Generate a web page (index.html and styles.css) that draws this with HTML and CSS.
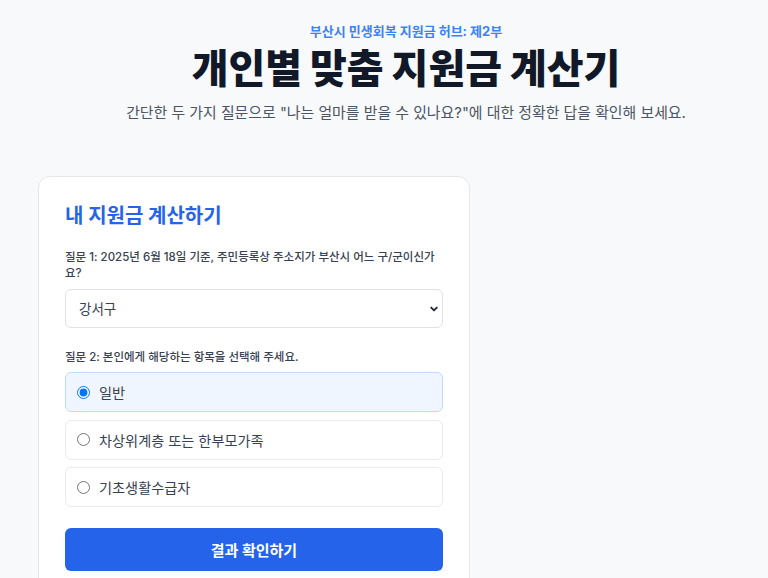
FILE: index.html
```html
<!DOCTYPE html>
<html lang="ko">
<head>
    <meta charset="UTF-8">
    <meta name="viewport" content="width=device-width, initial-scale=1.0">
    <title>개인별 맞춤 지원금 계산기</title>
    <link rel="stylesheet" href="styles.css">
</head>
<body>
    <header class="hero">
        <p class="hero-kicker">부산시 민생회복 지원금 허브: 제2부</p>
        <h1 class="hero-title">개인별 맞춤 지원금 계산기</h1>
        <p class="hero-desc">간단한 두 가지 질문으로 "나는 얼마를 받을 수 있나요?"에 대한 정확한 답을 확인해 보세요.</p>
    </header>

    <main class="layout">
        <section class="calc-card">
            <h2 class="calc-title">내 지원금 계산하기</h2>

            <label class="q-label" for="district">질문 1: 2025년 6월 18일 기준, 주민등록상 주소지가 부산시 어느 구/군이신가요?</label>
            <div class="select-wrap">
                <select id="district" class="district-select">
                    <option>강서구</option>
                    <option>금정구</option>
                    <option>기장군</option>
                    <option>남구</option>
                    <option>동구</option>
                    <option>동래구</option>
                    <option>부산진구</option>
                    <option>북구</option>
                    <option>사상구</option>
                    <option>사하구</option>
                    <option>서구</option>
                    <option>수영구</option>
                    <option>연제구</option>
                    <option>영도구</option>
                    <option>중구</option>
                    <option>해운대구</option>
                </select>
                <svg class="select-arrow" width="10" height="10" viewBox="0 0 10 10"><path d="M2.2 3.6 L5 6.4 L7.8 3.6" fill="none" stroke="#1f2937" stroke-width="1.9" stroke-linecap="round" stroke-linejoin="round"/></svg>
            </div>

            <p class="q-label q-label-2">질문 2: 본인에게 해당하는 항목을 선택해 주세요.</p>
            <div class="options">
                <label class="option active"><input type="radio" name="type" value="general" checked> 일반</label>
                <label class="option"><input type="radio" name="type" value="near-poor"> 차상위계층 또는 한부모가족</label>
                <label class="option"><input type="radio" name="type" value="basic"> 기초생활수급자</label>
            </div>

            <button class="submit-btn" type="button">결과 확인하기</button>
        </section>
    </main>

    <script>
        // 선택된 항목 강조
        document.querySelectorAll('.option input').forEach(function(radio) {
            radio.addEventListener('change', function() {
                document.querySelectorAll('.option').forEach(o => o.classList.remove('active'));
                this.parentElement.classList.add('active');
            });
        });
    </script>
</body>
</html>
```

FILE: styles.css
```css
body {
    margin: 0;
    background: #f8f9fb;
    font-family: Inter, "Noto Sans CJK KR", sans-serif;
    color: #1f2937;
}

.hero {
    text-align: center;
    padding: 22px 0 0 44px;
}

.hero-kicker {
    margin: 0;
    color: #3b82f6;
    font-size: 13px;
    font-weight: 700;
    line-height: 18px;
}

.hero-title {
    margin: 6px 0 0;
    font-size: 40px;
    font-weight: 900;
    line-height: 46px;
    color: #111827;
}

.hero-desc {
    margin: 10px 0 0;
    font-size: 14.9px;
    color: #4b5563;
    line-height: 22px;
}

.layout {
    padding: 52px 38px 0;
}

.calc-card {
    width: 432px;
    box-sizing: border-box;
    background: #fff;
    border: 1px solid #e5e7eb;
    border-radius: 12px;
    padding: 26px 26px 30px;
}

.calc-title {
    margin: 0 0 20px;
    color: #2563eb;
    font-size: 20px;
    font-weight: 700;
    line-height: 26px;
}

.q-label {
    display: block;
    margin: 0 0 8px;
    font-size: 11.5px;
    font-weight: 500;
    color: #374151;
    line-height: 16px;
}

.q-label-2 {
    margin: 21px 0 7px;
}

.select-wrap {
    position: relative;
}

.district-select {
    width: 100%;
    height: 39px;
    appearance: none;
    border: 1px solid #dfe2e6;
    border-radius: 6px;
    background: #fff;
    padding: 0 13px;
    font-family: inherit;
    font-size: 13.5px;
    color: #374151;
}

.select-arrow {
    position: absolute;
    right: 4px;
    top: 15px;
}

.options {
    display: flex;
    flex-direction: column;
    gap: 7.5px;
}

.option {
    display: flex;
    align-items: center;
    gap: 9px;
    height: 40px;
    box-sizing: border-box;
    padding: 0 10px;
    border: 1px solid #e9ebef;
    border-radius: 6px;
    font-size: 14.2px;
    color: #374151;
    cursor: pointer;
}

.option input {
    margin: 0 0 0 1px;
    width: 13px;
    height: 13px;
}

.option.active {
    background: #eff6ff;
    border-color: #bfdbfe;
}

.submit-btn {
    display: block;
    width: 100%;
    height: 43px;
    margin-top: 21px;
    border: none;
    border-radius: 6px;
    background: #2563eb;
    color: #fff;
    font-family: inherit;
    font-size: 15px;
    font-weight: 700;
    cursor: pointer;
}
```
